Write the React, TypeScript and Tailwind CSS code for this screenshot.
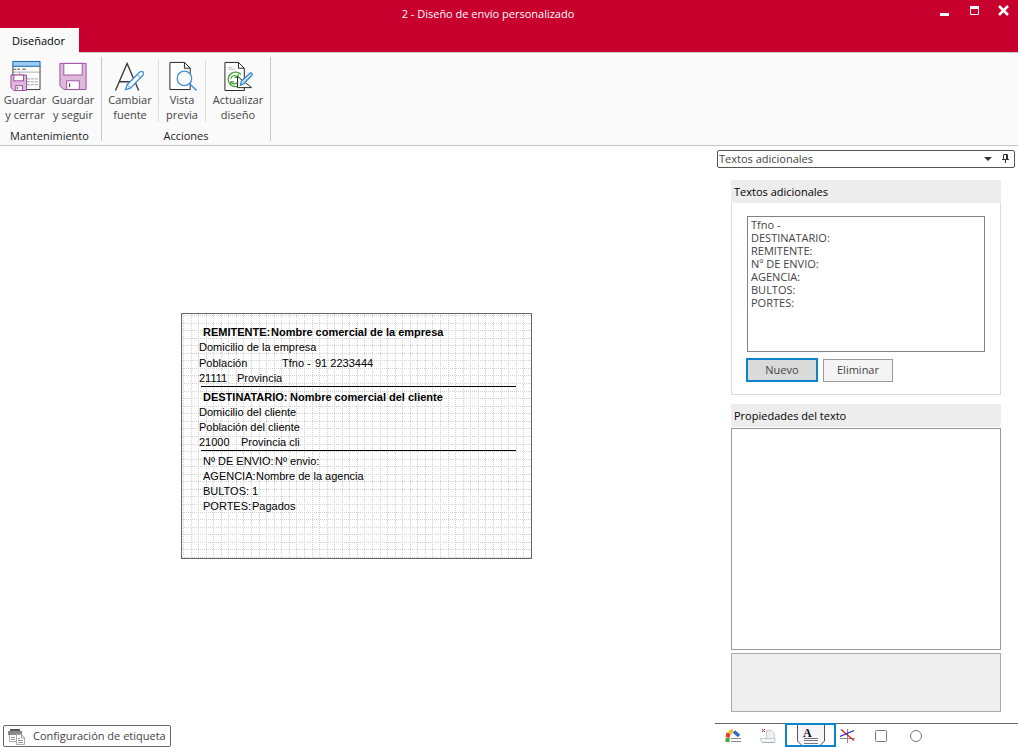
import { useState } from 'react';
import type { ReactNode } from 'react';

interface LabelItem {
  text: string;
  left: number;
  top: number;
  bold?: boolean;
}

const GRID_STEP = 7.56;
const LABEL_WIDTH = 349;
const LABEL_HEIGHT = 244;

const labelItems: LabelItem[] = [
  { text: 'REMITENTE:', left: 21, top: 11, bold: true },
  { text: 'Nombre comercial de la empresa', left: 89, top: 11, bold: true },
  { text: 'Domicilio de la empresa', left: 17, top: 26 },
  { text: 'Población', left: 17, top: 42 },
  { text: 'Tfno -', left: 100, top: 42 },
  { text: '91 2233444', left: 133, top: 42 },
  { text: '21111', left: 17, top: 57 },
  { text: 'Provincia', left: 55, top: 57 },
  { text: 'DESTINATARIO:', left: 21, top: 76, bold: true },
  { text: 'Nombre comercial del cliente', left: 108, top: 76, bold: true },
  { text: 'Domicilio del cliente', left: 17, top: 91 },
  { text: 'Población del cliente', left: 17, top: 106 },
  { text: '21000', left: 17, top: 121 },
  { text: 'Provincia cli', left: 59, top: 121 },
  { text: 'Nº DE ENVIO:', left: 21, top: 140 },
  { text: 'Nº envio:', left: 93, top: 140 },
  { text: 'AGENCIA:', left: 21, top: 155 },
  { text: 'Nombre de la agencia', left: 74, top: 155 },
  { text: 'BULTOS:', left: 21, top: 170 },
  { text: '1', left: 70, top: 170 },
  { text: 'PORTES:', left: 21, top: 185 },
  { text: 'Pagados', left: 70, top: 185 },
];

const additionalTexts = ['Tfno -', 'DESTINATARIO:', 'REMITENTE:', 'Nº DE ENVIO:', 'AGENCIA:', 'BULTOS:', 'PORTES:'];

const SaveCloseIcon = () => (
  <svg width="32" height="32" viewBox="0 0 32 32" fill="none" aria-hidden="true">
    <path d="M3 6h28v24H18V16H3z" fill="#fff" />
    <path d="M4 9.5h3m1 0h3m2 0h4" stroke="#555" />
    <path d="M3 12.5h28M10.5 12v4" stroke="#aaa" />
    <path d="M18 19.5h3m1 0h3m1 0h3M18 22.5h3m1 0h3m1 0h3M18 25.5h3m1 0h3m1 0h3" stroke="#999" />
    <path d="M31.5 6v24.5H18M3.5 6v10" stroke="#3a3a3a" />
    <rect x="3.5" y="1.5" width="28" height="5" fill="#9dcbf0" stroke="#0f67ae" />
    <path d="M1.5 15.5h16v16h-13l-3-3z" fill="#dfb9dc" stroke="#9c4a9a" />
    <rect x="4.5" y="15.500" width="10" height="6" fill="#fff" stroke="#9c4a9a" />
    <rect x="6.500" y="26.500" width="7" height="5" fill="#fff" stroke="#9c4a9a" />
    <path d="M8.500 28v2" stroke="#555" />
  </svg>
);

const SaveIcon = () => (
  <svg width="32" height="32" viewBox="0 0 32 32" fill="none" aria-hidden="true">
    <path d="M2.500 3.500h27v27H6.500l-4-4z" fill="#dfb9dc" stroke="#a050a0" />
    <rect x="6.500" y="3.500" width="19" height="12" fill="#fff" stroke="#a050a0" />
    <rect x="9.500" y="21.500" width="13" height="9" fill="#fff" stroke="#a050a0" />
    <path d="M12.500 24v4" stroke="#333" />
  </svg>
);

const FontIcon = () => (
  <svg width="32" height="32" viewBox="0 0 32 32" fill="none" aria-hidden="true">
    <path d="M1 31.500 13 3.500l12 28M5 22.500h16" stroke="#3a3a3a" strokeWidth="1.400" />
    <path d="m11.500 30.500 1.500-5L26 12.500q2.500-1.500 3.500 0t0 3L16.500 29z" fill="#fafafa" stroke="#3d8fd1" strokeWidth="1.300" />
    <path d="m13 25.500 3.500 3.500M23.500 15l3.500 3.500" stroke="#3d8fd1" />
  </svg>
);

const PreviewIcon = () => (
  <svg width="32" height="32" viewBox="0 0 32 32" fill="none" aria-hidden="true">
    <path d="M3.500 2.500h15l6 6v22h-21z" fill="#fff" stroke="#222" />
    <path d="M18.500 2.500v6h6" stroke="#222" />
    <circle cx="18.500" cy="19" r="7.500" fill="#fafafa" stroke="#3d8fd1" strokeWidth="1.300" />
    <path d="m24 24.500 7 7" stroke="#3d8fd1" strokeWidth="1.500" />
  </svg>
);

const UpdateIcon = () => (
  <svg width="32" height="32" viewBox="0 0 32 32" fill="none" aria-hidden="true">
    <path d="M2.500 2.500h14l6 6v23h-20z" fill="#fff" stroke="#222" />
    <path d="M16.500 2.500v6h6" stroke="#222" />
    <path d="M6 7.500h4M6 9.500h7" stroke="#bbb" />
    <path d="M16 27a7.500 7.500 0 1 1 3-12" stroke="#45a735" strokeWidth="1.400" />
    <path d="M8.500 19.500a4 4 0 0 1 7-2M15 23.500a4 4 0 0 1-6-.500M16 14.500v3.500h-3.500M8.500 26v-3.500H12" stroke="#45a735" strokeWidth="1.200" />
    <path d="m15.500 17 14.500 11.500H15.500z" fill="#fff" stroke="#222" />
    <path d="m18.500 26 1-4 9-8.500q2.500-.500 2 2l-8.500 9z" fill="#cfe6f8" stroke="#2c82c9" strokeWidth="1.300" />
  </svg>
);

const ChartIcon = () => (
  <svg width="18" height="16" viewBox="0 0 18 16" fill="none" aria-hidden="true">
    <path d="M3.500 9.500 4.500 5" stroke="#e03a22" strokeWidth="4" />
    <path d="m5 5 4-2.500" stroke="#edc32b" strokeWidth="4" />
    <path d="m10 3.500 5 4.500" stroke="#2f69cc" strokeWidth="3.500" />
    <path d="m3.500 14 0-4" stroke="#45a735" strokeWidth="4" />
    <path d="M7 10.500h10M7 13.500h10" stroke="#888" />
  </svg>
);

const PictureIcon = () => (
  <svg width="18" height="16" viewBox="0 0 18 16" fill="none" aria-hidden="true">
    <path d="M7.500 2.500h5l3 3v6h-8z" fill="#f0f0f0" stroke="#ccc" />
    <path d="m3 1 3 3m0-3L3 4" stroke="#d33" />
    <path d="M1 10.500h15v4H3z" fill="#f5f5f5" stroke="#b9d0ea" />
    <path d="M3 14.500h12" stroke="#aaa" />
  </svg>
);

const TextIcon = () => (
  <svg width="28" height="20" viewBox="0 0 28 20" fill="none" aria-hidden="true">
    <path d="M1 0h26v20H5l-4-4z" fill="#f5f5fa" />
    <path d="M.500 0v16l4 4M27.500 0v16l-4 4" stroke="#555" />
    <text x="6" y="12" fontSize="12" fontWeight="bold" fill="#111" className="font-['Liberation_Serif',serif]">A</text>
    <path d="M7 13.500h14M7 15.500h14M7 18.500h14" stroke="#777" />
  </svg>
);

const LinesIcon = () => (
  <svg width="16" height="16" viewBox="0 0 16 16" fill="none" aria-hidden="true">
    <path d="M8.500 1v14M1 10.500h15" stroke="#888" />
    <path d="m2 1.500 13 11" stroke="#e02020" strokeWidth="1.300" />
    <path d="m1 8.500 14-6" stroke="#2020d8" strokeWidth="1.300" />
  </svg>
);

const SquareIcon = () => (
  <svg width="14" height="14" viewBox="0 0 14 14" fill="none" aria-hidden="true">
    <rect x="1.500" y="1.500" width="11" height="11" rx="1" stroke="#777" />
  </svg>
);

const CircleIcon = () => (
  <svg width="14" height="14" viewBox="0 0 14 14" fill="none" aria-hidden="true">
    <circle cx="7" cy="7" r="5.500" stroke="#777" />
  </svg>
);

const tools = [
  { id: 'chart', label: 'Colores', icon: <ChartIcon />, width: 'w-9' },
  { id: 'picture', label: 'Imágenes', icon: <PictureIcon />, width: 'w-[34px]' },
  { id: 'text', label: 'Textos adicionales', icon: <TextIcon />, width: 'w-[51px]' },
  { id: 'lines', label: 'Líneas', icon: <LinesIcon />, width: 'w-[22px]' },
  { id: 'square', label: 'Rectángulos', icon: <SquareIcon />, width: 'w-[46px]' },
  { id: 'circle', label: 'Círculos', icon: <CircleIcon />, width: 'w-6' },
];

interface RibbonButtonProps {
  icon: ReactNode;
  lines: [string, string];
  className: string;
}

const RibbonButton = ({ icon, lines, className }: RibbonButtonProps) => (
  <button type="button" className={`flex flex-col items-center h-[62px] text-[#444] leading-[15px] ${className}`}>
    {icon}
    <span className="mt-px">{lines[0]}</span>
    <span>{lines[1]}</span>
  </button>
);

const TitleBar = () => (
  <header className="bg-[#c8002d] text-white border-b border-[#c6c6c6]">
    <div className="relative flex items-center justify-center h-7">
      <h1 className="mr-[42px]">2 - Diseño de envío personalizado</h1>
      <div className="absolute right-px top-0 flex">
        <button type="button" aria-label="Minimizar" className="w-[30px] h-5 flex justify-center items-center">
          <svg width="11" height="11" viewBox="0 0 11 11"><path d="M1 8h9v3H1z" fill="#fff" /></svg>
        </button>
        <button type="button" aria-label="Maximizar" className="w-[30px] h-5 flex justify-center items-center">
          <svg width="11" height="11" viewBox="0 0 11 11" fill="none">
            <path d="M1.500 2.500h8v7h-8z" stroke="#fff" />
            <path d="M1 1h9v3H1z" fill="#fff" />
          </svg>
        </button>
        <button type="button" aria-label="Cerrar" className="w-7 h-5 flex justify-center items-center">
          <svg width="11" height="11" viewBox="0 0 11 11"><path d="m1 1 9 9m0-9-9 9" stroke="#fff" strokeWidth="2.500" /></svg>
        </button>
      </div>
    </div>
    <nav className="flex h-6">
      <button type="button" className="w-[79px] -mb-px pt-px pr-0.5 bg-[#fafafa] text-black">Diseñador</button>
    </nav>
  </header>
);

const Ribbon = () => (
  <div className="flex h-[93px] pt-1 pb-1 bg-[#fafafa] border-b border-[#c6c6c6]">
    <section className="flex flex-col w-[102px] border-r border-[#c6c6c6]">
      <div className="flex pt-[3px] flex-1">
        <RibbonButton className="w-[50px]" icon={<SaveCloseIcon />} lines={['Guardar', 'y cerrar']} />
        <RibbonButton className="w-[46px]" icon={<SaveIcon />} lines={['Guardar', 'y seguir']} />
      </div>
      <h2 className="pr-0.5 text-center leading-[10px] text-[#222]">Mantenimiento</h2>
    </section>
    <section className="flex flex-col w-[169px] border-r border-[#c6c6c6]">
      <div className="flex pt-[3px] flex-1">
        <RibbonButton className="w-[57px] border-r border-[#dcdcdc]" icon={<FontIcon />} lines={['Cambiar', 'fuente']} />
        <RibbonButton className="w-[47px] border-r border-[#dcdcdc]" icon={<PreviewIcon />} lines={['Vista', 'previa']} />
        <RibbonButton className="flex-1" icon={<UpdateIcon />} lines={['Actualizar', 'diseño']} />
      </div>
      <h2 className="text-center leading-[10px] text-[#222]">Acciones</h2>
    </section>
  </div>
);

const LabelCanvas = () => {
  const columns = Array.from({ length: 46 }, (_, i) => Math.round(1 + i * GRID_STEP) + 0.5);
  const rows = Array.from({ length: 33 }, (_, i) => Math.round(1 + i * GRID_STEP) + 0.5);

  return (
    <div className="relative w-[351px] h-[246px] bg-white border border-[#666] font-['Liberation_Sans',Arial,sans-serif] text-[11px] leading-[14px] text-black">
      <svg className="absolute inset-0" width={LABEL_WIDTH} height={LABEL_HEIGHT} aria-hidden="true">
        {columns.map((x) => (
          <line key={`c${x}`} x1={x} x2={x} y1="0" y2={LABEL_HEIGHT} stroke="#d2d2d2" strokeDasharray="1 1" />
        ))}
        {rows.map((y) => (
          <line key={`r${y}`} x1="0" x2={LABEL_WIDTH} y1={y} y2={y} stroke="#d2d2d2" strokeDasharray="1 1" />
        ))}
        <path d="M19 72.500h315M19 136.500h315" stroke="#000" />
      </svg>
      {labelItems.map((item) => (
        <span
          key={`${item.left}-${item.top}`}
          className={`absolute whitespace-nowrap ${item.bold ? 'font-bold' : ''}`}
          style={{ left: item.left, top: item.top }}
        >
          {item.text}
        </span>
      ))}
    </div>
  );
};

const SidePanel = () => {
  const [activeTool, setActiveTool] = useState('text');

  return (
    <aside className="flex flex-col w-[304px] pt-1">
      <div className="flex items-center h-[18px] ml-[3px] mr-[3px] border border-[#555] rounded-xs">
        <div className="relative flex-1 flex items-center">
          <select aria-label="Panel" className="w-full appearance-none pl-px text-[#444] leading-4 bg-transparent">
            <option>Textos adicionales</option>
          </select>
          <svg className="absolute right-1 pointer-events-none" width="8" height="4" viewBox="0 0 8 4"><path d="M0 0h8L4 4z" fill="#333" /></svg>
        </div>
        <button type="button" aria-label="Fijar panel" className="w-[18px] pb-0.5 flex justify-center">
          <svg width="9" height="11" viewBox="0 0 9 11" fill="none">
            <path d="M2.500 6V1.500h4V6M1 6.500h7M4.500 7v3" stroke="#333" />
            <path d="M5.500 1v5" stroke="#333" />
          </svg>
        </button>
      </div>

      <div className="flex flex-col flex-1 pl-[17px] pr-[17px] pt-3 pb-[11px]">
        <section>
          <h2 className="h-[23px] px-[3px] leading-[23px] bg-[#ededed] text-black">
            <label htmlFor="texts">Textos adicionales</label>
          </h2>
          <div className="px-[15px] pt-[13px] pb-3 border border-t-0 border-[#dcdcdc]">
            <select id="texts" size={10} className="block w-full h-[136px] px-0.5 py-0 border border-[#7f8389] bg-white text-[#444] text-[11px] overflow-hidden">
              {additionalTexts.map((text) => (
                <option key={text} className="h-[13px] min-h-0 px-px py-0 leading-[13px]">{text}</option>
              ))}
            </select>
            <div className="flex items-center gap-[5px] mt-1.5 -ml-px text-[#444]">
              <button type="button" className="w-[72px] h-6 border-2 border-[#0a84cc] bg-[#dadada]">Nuevo</button>
              <button type="button" className="w-[70px] h-[23px] border border-[#999] bg-[#f4f4f4]">Eliminar</button>
            </div>
          </div>
        </section>

        <section className="flex flex-col flex-1 mt-[9px]">
          <h2 className="h-[23px] mb-px px-[3px] leading-[23px] bg-[#ededed] text-black">Propiedades del texto</h2>
          <div className="flex-1 border border-[#999] bg-white" />
          <div className="h-[59px] mt-[3px] border border-[#aaa] bg-[#efefef]" />
        </section>
      </div>

      <div className="flex items-center h-6 ml-px border-t border-[#666]">
        {tools.map((tool) => (
          <button
            key={tool.id}
            type="button"
            aria-label={tool.label}
            onClick={() => setActiveTool(tool.id)}
            className={`flex items-center justify-center h-6 ${tool.width} ${
              activeTool === tool.id ? '-mt-0.5 border-2 border-[#0a84cc]' : ''
            }`}
          >
            {tool.icon}
          </button>
        ))}
      </div>
    </aside>
  );
};

const App = () => {
  return (
    <div className="flex flex-col h-screen bg-white font-['Open_Sans','Noto_Sans',sans-serif] text-[11px]">
      <TitleBar />
      <Ribbon />
      <div className="flex flex-1 min-h-0">
        <main className="flex flex-col flex-1">
          <div className="flex flex-1 items-center justify-center pr-px">
            <LabelCanvas />
          </div>
          <div className="pl-[3px]">
            <button type="button" className="flex items-center h-[22px] w-[168px] pl-1 gap-2 border border-[#666] rounded-xs text-[#444]">
              <svg width="17" height="17" viewBox="0 0 17 17" fill="none" aria-hidden="true">
                <path d="M1.500 5.500h10v8h-10z" fill="#fff" stroke="#aaa" />
                <path d="M2 1h10v3H2z" fill="#555" />
                <path d="M0 3h14v4H0z" fill="#888" />
                <path d="M3 9.500h4M3 11.500h4" stroke="#999" />
                <path d="M8.500 6.500h5l3 3v7h-8z" fill="#fff" stroke="#aaa" />
                <path d="M13.500 7v3h3M10 10.500h2M10 12.500h5M10 14.500h5" stroke="#999" />
              </svg>
              Configuración de etiqueta
            </button>
          </div>
        </main>
        <SidePanel />
      </div>
    </div>
  );
};

export default App;
